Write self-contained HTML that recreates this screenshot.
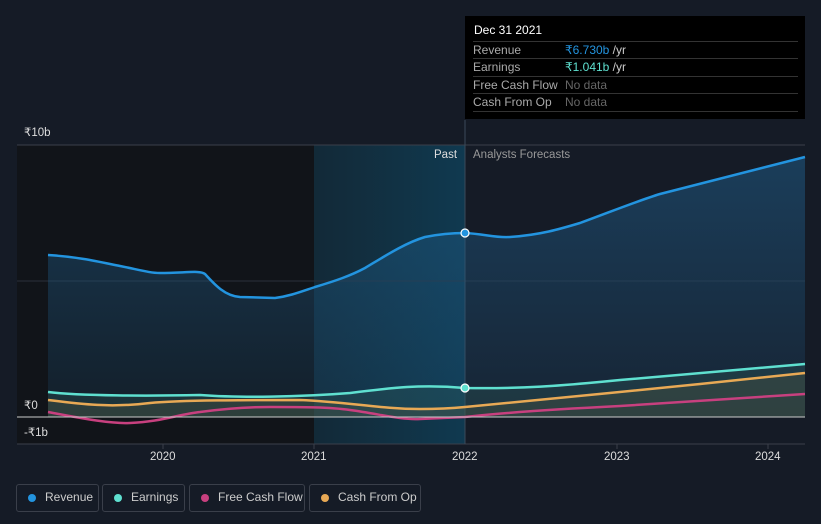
<!DOCTYPE html>
<html><head><meta charset="utf-8"><style>
body{margin:0;width:821px;height:524px;background:#151b26;font-family:"Liberation Sans",sans-serif;overflow:hidden;position:relative;color:#fff}
.t{position:absolute;font-size:11.5px}
.tip{position:absolute;left:465px;top:16px;width:340px;height:103px;background:#000}
.tip .h{position:absolute;left:9px;top:7px;font-size:12px;color:#fff}
.row{position:absolute;left:8px;width:325px;border-top:1px solid #333;height:17px;font-size:12px;color:#aaa}
.row span{position:absolute;top:1px}
.leg{position:absolute;top:484px;height:26px;border:1px solid #3a3f4a;border-radius:3px;font-size:12px;color:#ccc}
.leg i{position:absolute;left:11px;top:9px;width:8px;height:8px;border-radius:50%}
.leg span{position:absolute;left:28px;top:5px}
</style></head><body>
<svg width="821" height="524" style="position:absolute;left:0;top:0">
<defs>
<linearGradient id="hl" x1="0" x2="1"><stop offset="0" stop-color="#10384a" stop-opacity=".5"/><stop offset="1" stop-color="#0f3d55" stop-opacity=".9"/></linearGradient>
<linearGradient id="rv" x1="0" y1="0" x2="0" y2="1"><stop offset="0" stop-color="#1f5a85" stop-opacity=".55"/><stop offset="1" stop-color="#1f5a85" stop-opacity=".15"/></linearGradient>
</defs>
<rect x="17" y="145" width="297" height="299" fill="#111419"/>
<rect x="314" y="145" width="151" height="299" fill="url(#hl)"/>
<line x1="17" y1="145" x2="805" y2="145" stroke="#3a3f4a"/>
<line x1="17" y1="281" x2="805" y2="281" stroke="#2a2f3a"/>
<line x1="17" y1="444" x2="805" y2="444" stroke="#3a3f4a"/>
<line x1="465" y1="120" x2="465" y2="444" stroke="#3a4a5a"/>
<path d="M48,255 C80,257 100,262 120,266 C140,270 150,273 160,273 C185,273 200,270 205,274 C215,285 225,296 240,297 L275,298 C290,296 300,292 315,287 C335,281 350,276 365,268 C385,256 405,243 425,237 C445,233 460,233 465,233 C485,234 495,238 510,237 C540,235 560,229 580,223 C610,212 640,200 660,194 L805,157 L805,417 L48,417 Z" fill="url(#rv)"/>
<path d="M48,392 C80,396 150,396 200,395 C240,398 300,397 350,393 C390,388 420,384 465,388 C520,389 560,386 620,380 L805,364 L805,417 L48,417Z" fill="#2b5a5a" fill-opacity=".35"/>
<path d="M48,400 C80,404 110,408 150,403 C180,400 250,400 300,400 C350,402 380,409 420,409 C440,409 455,408 465,407 C550,399 620,392 700,384 L805,373 L805,417 L48,417Z" fill="#5a5a40" fill-opacity=".3"/>
<path d="M48,255 C80,257 100,262 120,266 C140,270 150,273 160,273 C185,273 200,270 205,274 C215,285 225,296 240,297 L275,298 C290,296 300,292 315,287 C335,281 350,276 365,268 C385,256 405,243 425,237 C445,233 460,233 465,233 C485,234 495,238 510,237 C540,235 560,229 580,223 C610,212 640,200 660,194 L805,157" fill="none" stroke="#2394df" stroke-width="2.5"/>
<path d="M48,392 C80,396 150,396 200,395 C240,398 300,397 350,393 C390,388 420,384 465,388 C520,389 560,386 620,380 L805,364" fill="none" stroke="#5fe0d0" stroke-width="2.5"/>
<path d="M48,400 C80,404 110,408 150,403 C180,400 250,400 300,400 C350,402 380,409 420,409 C440,409 455,408 465,407 C550,399 620,392 700,384 L805,373" fill="none" stroke="#e8a955" stroke-width="2.5"/>
<path d="M48,412 C80,418 110,424 130,423 C160,422 180,414 200,412 C230,408 250,407 270,407 C300,407 330,407 350,410 C380,414 400,420 420,419 L465,417 C500,413 540,410 620,406 L805,394" fill="none" stroke="#c8407f" stroke-width="2.5"/>
<line x1="17" y1="417" x2="805" y2="417" stroke="#ccc" stroke-width="1"/>
<circle cx="465" cy="233" r="4" fill="#2394df" stroke="#fff" stroke-width="1.2"/>
<circle cx="465" cy="388" r="4" fill="#5fe0d0" stroke="#fff" stroke-width="1.2"/>
<g stroke="#3a3f4a"><line x1="163" y1="444" x2="163" y2="449"/><line x1="314" y1="444" x2="314" y2="449"/><line x1="617" y1="444" x2="617" y2="449"/><line x1="768" y1="444" x2="768" y2="449"/></g>
</svg>
<div class="t" style="left:24px;top:125px;color:#ddd">₹10b</div>
<div class="t" style="left:24px;top:398px;color:#ddd">₹0</div>
<div class="t" style="left:24px;top:425px;color:#ddd">-₹1b</div>
<div class="t" style="left:434px;top:149px;color:#ddd">Past</div>
<div class="t" style="left:473px;top:149px;color:#999">Analysts Forecasts</div>
<div class="t" style="left:150px;top:451px;color:#ddd">2020</div>
<div class="t" style="left:301px;top:451px;color:#ddd">2021</div>
<div class="t" style="left:452px;top:451px;color:#ddd">2022</div>
<div class="t" style="left:604px;top:451px;color:#ddd">2023</div>
<div class="t" style="left:755px;top:451px;color:#ddd">2024</div>
<div class="tip"><div class="h">Dec 31 2021</div>
<div class="row" style="top:25px"><span>Revenue</span><span style="left:92px;color:#2394df">₹6.730b <span style="position:static;color:#ccc">/yr</span></span></div>
<div class="row" style="top:42px"><span>Earnings</span><span style="left:92px;color:#5fe0d0">₹1.041b <span style="position:static;color:#ccc">/yr</span></span></div>
<div class="row" style="top:60px"><span>Free Cash Flow</span><span style="left:92px;color:#666">No data</span></div>
<div class="row" style="top:77px;border-bottom:1px solid #333"><span>Cash From Op</span><span style="left:92px;color:#666">No data</span></div>
</div>
<div class="leg" style="left:16px;width:81px"><i style="background:#2394df"></i><span>Revenue</span></div>
<div class="leg" style="left:102px;width:81px"><i style="background:#5fe0d0"></i><span>Earnings</span></div>
<div class="leg" style="left:189px;width:114px"><i style="background:#c8407f"></i><span>Free Cash Flow</span></div>
<div class="leg" style="left:309px;width:110px"><i style="background:#e8a955"></i><span>Cash From Op</span></div>
</body></html>
